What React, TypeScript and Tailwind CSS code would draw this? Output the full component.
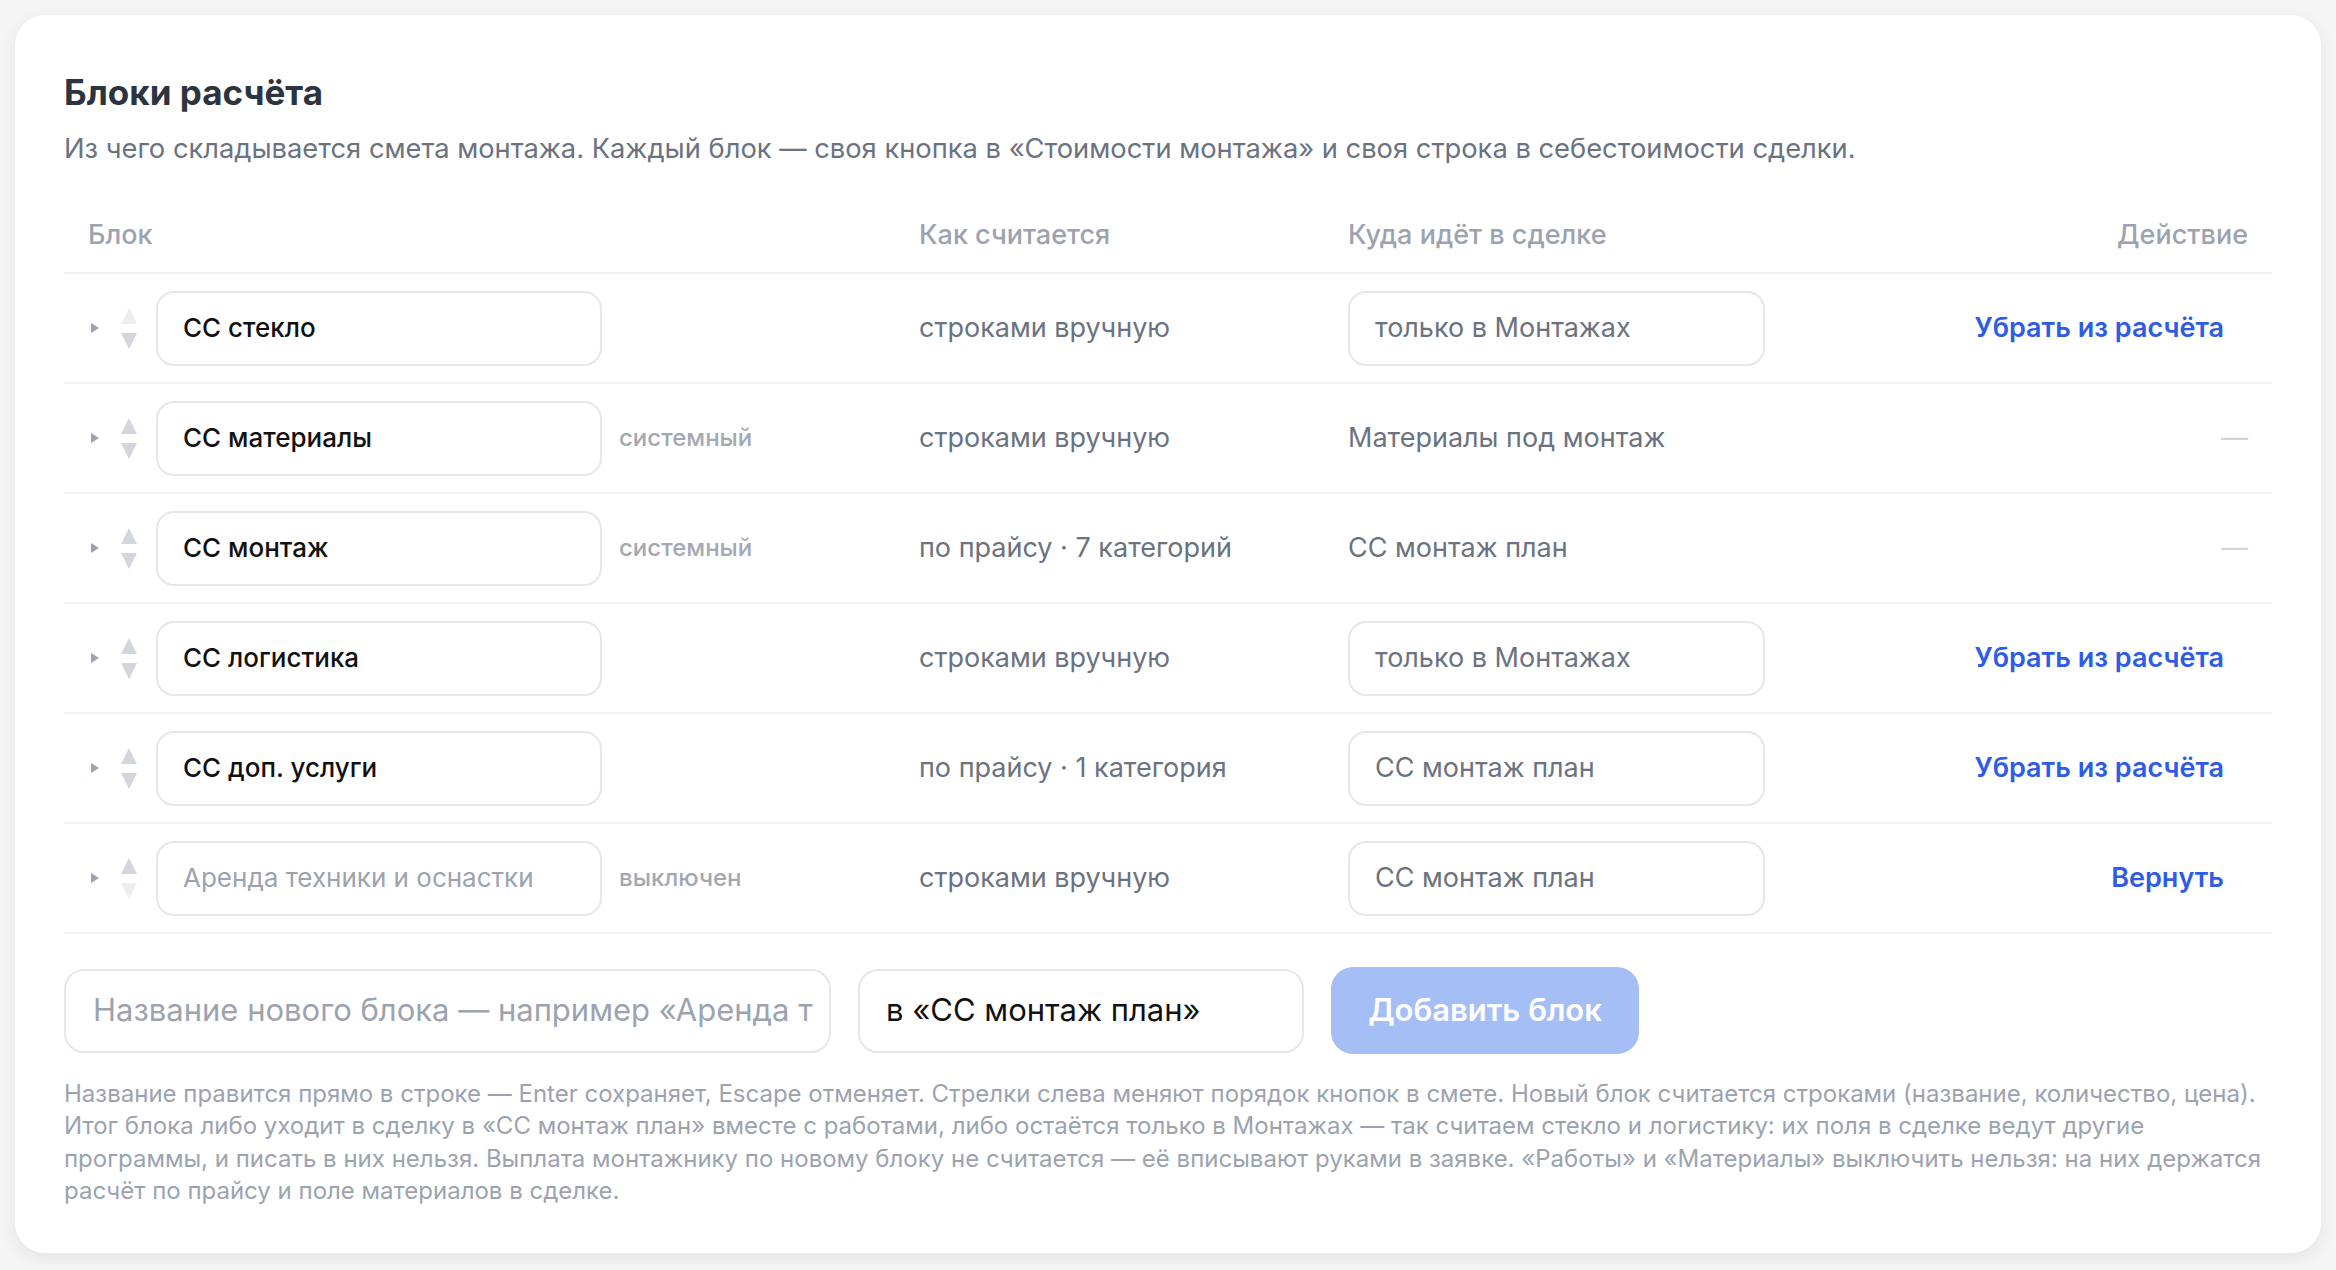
import React from 'react';

type Row = {
  name: string;
  tag?: string;
  how: string;
  dest: string;
  destBox: boolean;
  action: 'remove' | 'restore' | 'none';
  upOff?: boolean;
  downOff?: boolean;
  disabled?: boolean;
};

const rows: Row[] = [
  { name: 'СС стекло', how: 'строками вручную', dest: 'только в Монтажах', destBox: true, action: 'remove', upOff: true },
  { name: 'СС материалы', tag: 'системный', how: 'строками вручную', dest: 'Материалы под монтаж', destBox: false, action: 'none' },
  { name: 'СС монтаж', tag: 'системный', how: 'по прайсу · 7 категорий', dest: 'СС монтаж план', destBox: false, action: 'none' },
  { name: 'СС логистика', how: 'строками вручную', dest: 'только в Монтажах', destBox: true, action: 'remove' },
  { name: 'СС доп. услуги', how: 'по прайсу · 1 категория', dest: 'СС монтаж план', destBox: true, action: 'remove' },
  { name: 'Аренда техники и оснастки', tag: 'выключен', how: 'строками вручную', dest: 'СС монтаж план', destBox: true, action: 'restore', downOff: true, disabled: true },
];

const Arrows = ({ upOff, downOff }: { upOff?: boolean; downOff?: boolean }) => (
  <div className="flex flex-col items-center gap-[7px]">
    <svg width="18" height="18" viewBox="0 0 18 18">
      <path d="M9 1 L17 17 L1 17 Z" fill={upOff ? '#eceef1' : '#d3d6dc'} />
    </svg>
    <svg width="18" height="18" viewBox="0 0 18 18">
      <path d="M1 1 L17 1 L9 17 Z" fill={downOff ? '#eceef1' : '#d3d6dc'} />
    </svg>
  </div>
);

const Chevron = () => (
  <svg width="8" height="10" viewBox="0 0 8 10">
    <path d="M0 0 L8 5 L0 10 Z" fill="#9ca3af" />
  </svg>
);

export default function App() {
  return (
    <div className="min-h-screen bg-[#f5f5f6] px-[15px] pt-[15px] pb-[19px] font-['Inter',sans-serif]">
      <div className="rounded-[30px] bg-white px-[49px] pt-[55px] pb-[45px] shadow-[0_6px_18px_rgba(0,0,0,0.07)]">
        <h1 className="text-[35px] font-bold leading-[44px] text-[#2d3441]">Блоки расчёта</h1>
        <p className="mt-[17px] text-[27.3px] leading-[36px] text-[#6b7280]">
          Из чего складывается смета монтажа. Каждый блок — своя кнопка в «Стоимости монтажа» и своя строка в себестоимости сделки.
        </p>

        <div className="mt-[30px]">
          <div className="grid grid-cols-[831px_429px_1fr_auto] items-center border-b-2 border-[#eef0f2] pt-[22px] pb-[21px] text-[27px] font-medium leading-[32px] text-[#9ca3af]">
            <div className="pl-[24px]">Блок</div>
            <div className="pl-[24px]">Как считается</div>
            <div className="pl-[24px]">Куда идёт в сделке</div>
            <div className="pr-[24px] text-right">Действие</div>
          </div>

          {rows.map((r) => (
            <div
              key={r.name}
              className="grid h-[110px] grid-cols-[831px_429px_1fr_auto] items-center border-b-2 border-[#f3f4f6] text-[27px] leading-[32px]"
            >
              <div className="flex items-center pl-[27px]">
                <Chevron />
                <div className="ml-[21px]">
                  <Arrows upOff={r.upOff} downOff={r.downOff} />
                </div>
                <div
                  className={`ml-[18px] flex h-[75px] w-[446px] items-center rounded-[18px] border-2 border-[#e6e7eb] bg-white pl-[25px] text-[26px] ${
                    r.disabled ? 'font-normal text-[#9ca3af]' : 'font-medium text-[#111111]'
                  }`}
                >
                  {r.name}
                </div>
                {r.tag && <span className="ml-[17px] text-[24px] font-medium text-[#a3a8b2]">{r.tag}</span>}
              </div>
              <div className="pl-[24px] text-[#6b7280]">{r.how}</div>
              <div className="pl-[24px] text-[#6b7280]">
                {r.destBox ? (
                  <div className="flex h-[75px] w-[417px] items-center rounded-[18px] border-2 border-[#e6e7eb] pl-[25px]">{r.dest}</div>
                ) : (
                  r.dest
                )}
              </div>
              <div className="flex justify-end pr-[24px]">
                {r.action === 'remove' && (
                  <button className="px-[24px] font-semibold text-[#2f5ce6]">Убрать из расчёта</button>
                )}
                {r.action === 'restore' && <button className="px-[24px] font-semibold text-[#2f5ce6]">Вернуть</button>}
                {r.action === 'none' && <span className="text-[#d1d5db]">—</span>}
              </div>
            </div>
          ))}
        </div>

        <div className="mt-[33px] flex items-center gap-[27px]">
          <div className="flex h-[84px] w-[767px] items-center overflow-hidden whitespace-nowrap rounded-[20px] border-2 border-[#e6e7eb] pl-[27px] text-[31px] text-[#9ca3af]">
            Название нового блока — например «Аренда т
          </div>
          <div className="flex h-[84px] w-[446px] items-center rounded-[20px] border-2 border-[#e6e7eb] pl-[26px] text-[31px] text-[#111111]">
            в «СС монтаж план»
          </div>
          <button className="h-[87px] w-[308px] rounded-[22px] bg-[#a5bef6] text-[31px] font-semibold text-white">
            Добавить блок
          </button>
        </div>

        <div className="mt-[24px] text-[24px] leading-[32.4px] text-[#9ca3af]">
          <div className="whitespace-nowrap">
            Название правится прямо в строке — Enter сохраняет, Escape отменяет. Стрелки слева меняют порядок кнопок в смете. Новый блок считается строками (название, количество, цена).
          </div>
          <div className="whitespace-nowrap">
            Итог блока либо уходит в сделку в «СС монтаж план» вместе с работами, либо остаётся только в Монтажах — так считаем стекло и логистику: их поля в сделке ведут другие
          </div>
          <div className="whitespace-nowrap">
            программы, и писать в них нельзя. Выплата монтажнику по новому блоку не считается — её вписывают руками в заявке. «Работы» и «Материалы» выключить нельзя: на них держатся
          </div>
          <div className="whitespace-nowrap">расчёт по прайсу и поле материалов в сделке.</div>
        </div>
      </div>
    </div>
  );
}
